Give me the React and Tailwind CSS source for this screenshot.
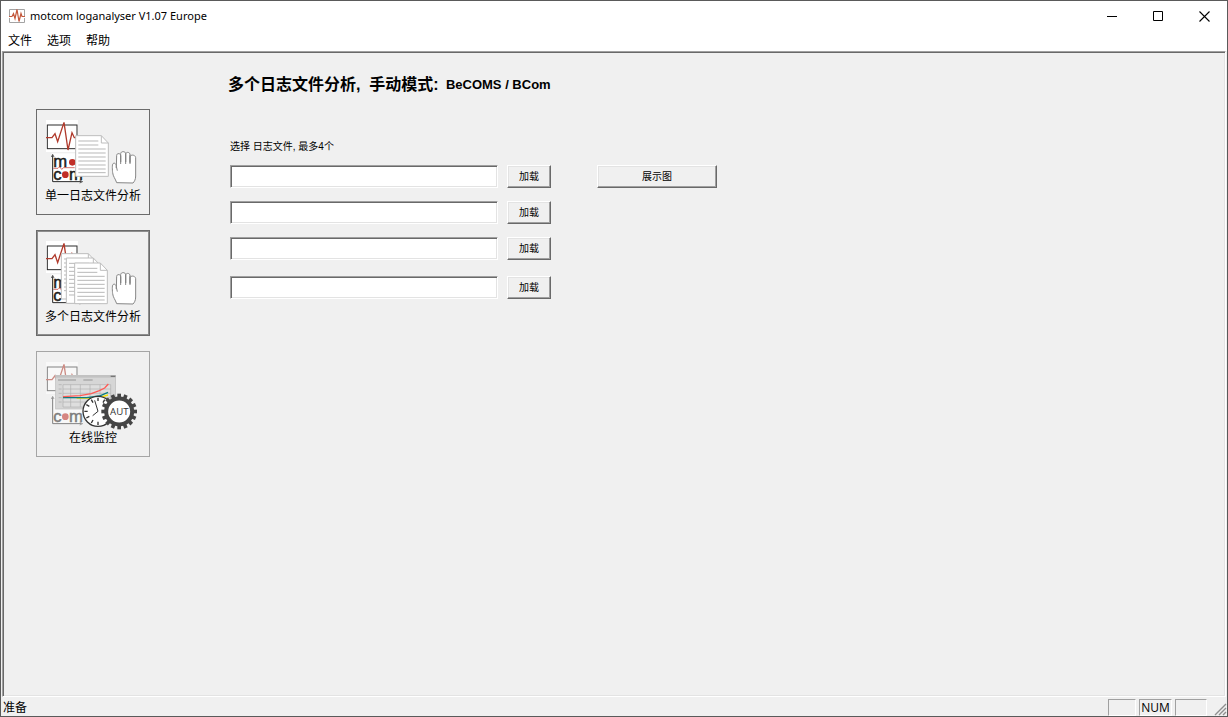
import React, { useState } from 'react';

const menuItems = ['文件', '选项', '帮助'];

const modes = [
  { id: 'single', label: '单一日志文件分析' },
  { id: 'multi', label: '多个日志文件分析' },
  { id: 'online', label: '在线监控', disabled: true },
];

const raised =
  'border border-t-white border-l-white border-b-[#696969] border-r-[#696969] shadow-[inset_-1px_-1px_0_#a0a0a0,inset_1px_1px_0_#e3e3e3]';

const AppIcon = () => (
  <svg width="16" height="16" viewBox="0 0 16 16" fill="none" aria-hidden="true">
    <path d="M0.5 9V1.5H15.5V9M0.5 10V14.5H15.5V10" stroke="#a3a3a3" />
    <path d="M0 8.5h3l1.5-3 1.5 5 2-9 2 12 2-8 1 3h3" stroke="#c4583c" strokeWidth="1.2" />
  </svg>
);

// Heartbeat frame that sits behind every mode icon
const Pulse = () => (
  <>
    <rect x="48" y="50" width="96" height="96" fill="#fff" />
    <rect x="52" y="65" width="89" height="71" fill="none" stroke="#2c2c2c" strokeWidth="3" />
    <path
      d="M48 103H66L75 91L83 115L102 57L114 140L126 88L133 103H146"
      fill="none"
      stroke="#b03a2c"
      strokeWidth="4"
    />
  </>
);

const Axes = () => (
  <g stroke="#222" strokeWidth="3" fill="none">
    <path d="M68 156V235H154" />
    <path d="M64 161L68 153L72 161M149 231L158 235L149 239" strokeWidth="2" />
  </g>
);

const Sheet = ({ x, y, w = 98, h = 122 }) => (
  <g transform={`translate(${x} ${y})`}>
    <path d={`M0 0H${w - 21}L${w} 22V${h}H0Z`} fill="#fff" stroke="#bdbdbd" strokeWidth="3" />
    <path d={`M${w - 21} 0V22H${w}`} fill="none" stroke="#bdbdbd" strokeWidth="3" />
    <path
      d="M8 16H68M8 28H68M8 40H90M8 52H90M8 64H90M8 76H90M8 88H90M8 100H90M8 111H90"
      stroke="#a9a9a9"
      strokeWidth="2.5"
    />
  </g>
);

const Hand = () => (
  <path
    d="M260 238C256 226 249 219 248 208C247 200 246 184 249 181C254 177 259 182 259 189V194L260 156C260 149 272 149 272 157V176V151C272 143 287 143 287 151V176V153C287 145 300 145 300 154V178V162C300 153 316 153 317 163V218C317 228 313 235 309 239Z M272 157V182M287 151V182M300 154V182M259 189L262 202"
    fill="#fff"
    stroke="#858585"
    strokeWidth="3"
    strokeLinejoin="round"
  />
);

const Brand = () => (
  <g>
    <rect x="65" y="150" width="94" height="88" fill="#fff" />
    <text
      fontFamily="'Liberation Sans', Arial, sans-serif"
      fontSize="50"
      fill="#1c1c1c"
      stroke="#1c1c1c"
      strokeWidth="1.5"
    >
      <tspan x="70" y="190">m</tspan>
      <tspan x="70" y="229">c</tspan>
      <tspan x="117" y="229">m</tspan>
    </text>
    <circle cx="127" cy="177" r="10" fill="#c12e27" />
    <circle cx="106" cy="214" r="10" fill="#c12e27" />
    <path d="M70 195H84L89 190L95 198L101 193H134" stroke="#c12e27" strokeWidth="2" fill="none" />
    <Axes />
  </g>
);

const SingleIcon = () => (
  <>
    <Pulse />
    <Brand />
    <Sheet x={137} y={97} />
    <Hand />
  </>
);

const MultiIcon = () => (
  <>
    <Pulse />
    <Brand />
    <Sheet x={94} y={88} w={102} h={136} />
    <Sheet x={109} y={101} w={102} h={136} />
    <Sheet x={134} y={116} />
    <Hand />
  </>
);

const gearTeeth = Array.from({ length: 16 }, (_, i) => i * 22.5);

const OnlineIcon = () => (
  <>
    <g opacity="0.55">
      <Pulse />
      <rect x="65" y="150" width="94" height="88" fill="#fff" />
      <text
        fontFamily="'Liberation Sans', Arial, sans-serif"
        fontSize="50"
        fill="#1c1c1c"
        stroke="#1c1c1c"
        strokeWidth="1.5"
      >
        <tspan x="70" y="229">c</tspan>
        <tspan x="117" y="229">m</tspan>
      </text>
      <circle cx="106" cy="214" r="10" fill="#c12e27" />
      <Axes />
    </g>
    <rect x="77" y="90" width="180" height="101" fill="#d6d6d6" stroke="#bcbcbc" strokeWidth="2" />
    <rect x="77" y="89" width="180" height="8" fill="#c2c2c2" />
    <path d="M242 93H256" stroke="#777" strokeWidth="4" />
    <path d="M84 104H138M160 104H188" stroke="#777" strokeWidth="2" />
    <rect x="99" y="118" width="143" height="67" fill="#dedede" />
    <path
      d="M99 118H242M99 131H242M99 144H242M99 157H242M99 170H242M99 185H242M99 118V185M122 118V185M151 118V185M180 118V185M210 118V185M242 118V185"
      stroke="#b1b1b1"
      strokeWidth="2"
    />
    <path d="M86 118H95M86 131H95M86 144H95M86 157H95M86 170H95" stroke="#aaa" strokeWidth="2" />
    <path d="M140 158H185L210 156L234 149" stroke="#f1e400" strokeWidth="4" fill="none" />
    <path d="M99 157H170L208 152L234 141" stroke="#0b7d80" strokeWidth="4" fill="none" />
    <path d="M99 154L150 151L184 145L208 136L224 128L235 116" stroke="#ff5b55" strokeWidth="4" fill="none" />
    <circle cx="204" cy="198" r="45" fill="#fff" stroke="#333" strokeWidth="4" />
    <path
      d="M204 157V167M184 163L189 172M169 178L178 183M163 198H173M169 218L178 213M184 233L189 224M204 229V239M224 163L219 172"
      stroke="#333"
      strokeWidth="4"
    />
    <path d="M194 165L204 198L188 211" stroke="#333" strokeWidth="3" fill="none" />
    {gearTeeth.map((a) => (
      <rect key={a} x="262" y="145" width="11" height="14" fill="#454545" transform={`rotate(${a} 267.5 198.5)`} />
    ))}
    <circle cx="267.5" cy="198.5" r="39" fill="#fff" stroke="#454545" strokeWidth="12" />
    <text
      x="268"
      y="208"
      textAnchor="middle"
      fontFamily="'Open Sans', sans-serif"
      fontSize="29"
      fill="#333"
    >
      AUT
    </text>
  </>
);

const icons = { single: SingleIcon, multi: MultiIcon, online: OnlineIcon };

const ModeButton = ({ mode, active, onClick }) => {
  const Icon = icons[mode.id];
  let border = 'border-[#6b6b6b]';
  if (active) border = 'border-[#6b6b6b] shadow-[inset_0_0_0_1px_#8e8e8e]';
  if (mode.disabled) border = 'border-[#a5a5a5]';
  return (
    <button
      type="button"
      disabled={mode.disabled}
      onClick={onClick}
      className={`flex h-[106px] w-full flex-col items-center justify-center border ${border}`}
    >
      <svg width="94" height="68" viewBox="48 50 282 204" aria-hidden="true">
        <Icon />
      </svg>
      <span className="text-[12px] leading-4 whitespace-nowrap">{mode.label}</span>
    </button>
  );
};

const FileRow = ({ index, value, onChange }) => (
  <div className="flex gap-[9px] last:mt-[3px]">
    <input
      type="text"
      aria-labelledby="files-label"
      value={value}
      onChange={(e) => onChange(index, e.target.value)}
      className="h-[23px] w-[268px] border border-t-[#a0a0a0] border-l-[#a0a0a0] border-b-white border-r-white bg-white px-1 text-[11px] shadow-[inset_1px_1px_0_#696969,inset_-1px_-1px_0_#e3e3e3] outline-none"
    />
    <button type="button" className={`h-[23px] w-11 text-[10px] ${raised}`}>
      加载
    </button>
  </div>
);

const App = () => {
  const [mode, setMode] = useState('multi');
  const [files, setFiles] = useState(['', '', '', '']);

  const updateFile = (index, value) => {
    setFiles(files.map((f, i) => (i === index ? value : f)));
  };

  return (
    <div className="flex min-h-screen flex-col border border-[#5a5a5a] bg-[#f0f0f0] font-['Open_Sans','Noto_Sans_CJK_SC',sans-serif] text-[12px] text-black">
      {/* Title bar */}
      <header className="flex h-[30px] items-center bg-white pl-2">
        <AppIcon />
        <h1 className="ml-[5px] flex-1 text-[11px] font-['Noto_Sans','Noto_Sans_CJK_SC',sans-serif]">
          motcom loganalyser V1.07 Europe
        </h1>
        <button type="button" aria-label="最小化" className="flex h-full w-[46px] items-center justify-center">
          <svg width="11" height="11" viewBox="0 0 11 11" stroke="#000">
            <path d="M0 5.5H10" />
          </svg>
        </button>
        <button type="button" aria-label="最大化" className="flex h-full w-[46px] items-center justify-center">
          <svg width="11" height="11" viewBox="0 0 11 11" fill="none" stroke="#000">
            <path d="M0.5 0.5H9.5V9.5H0.5Z" />
          </svg>
        </button>
        <button type="button" aria-label="关闭" className="flex h-full w-[46px] items-center justify-center">
          <svg width="11" height="11" viewBox="0 0 11 11" stroke="#000" strokeWidth="1.1">
            <path d="M0.5 0.5L10.5 10.5M10.5 0.5L0.5 10.5" />
          </svg>
        </button>
      </header>

      {/* Menu */}
      <nav className="flex h-5 items-center gap-[15px] bg-white pl-[7px]">
        {menuItems.map((item) => (
          <button key={item} type="button" className="text-[12px] leading-5">
            {item}
          </button>
        ))}
      </nav>

      {/* Client area */}
      <main className="mx-px flex flex-1 border border-t-[#a0a0a0] border-l-[#a0a0a0] border-b-white border-r-white pt-[17px] pl-[33px] shadow-[inset_1px_1px_0_#696969,inset_-1px_-1px_0_#e3e3e3]">
        <aside className="flex w-[114px] shrink-0 flex-col gap-[15px] pt-10">
          {modes.map((m) => (
            <ModeButton key={m.id} mode={m} active={mode === m.id} onClick={() => setMode(m.id)} />
          ))}
        </aside>

        <section className="flex-1 pl-20">
          <h2 className="-ml-0.5 flex h-8 items-center font-bold whitespace-pre">
            <span className="text-[16px] font-['Liberation_Sans','Noto_Sans_CJK_SC',sans-serif]">
              多个日志文件分析,  手动模式:
            </span>
            <span className="text-[13px] font-['Liberation_Sans',sans-serif]">{'  '}BeCOMS / BCom</span>
          </h2>
          <p
            id="files-label"
            className="mt-9 text-[10px] leading-5 font-['Liberation_Sans','Noto_Sans_CJK_SC',sans-serif]"
          >
            选择 日志文件, 最多4个
          </p>
          <div className="mt-2 flex items-start gap-[46px]">
            <div className="flex flex-col gap-[13px]">
              {files.map((file, i) => (
                <FileRow key={i} index={i} value={file} onChange={updateFile} />
              ))}
            </div>
            <button type="button" className={`h-[23px] w-[120px] text-[10px] ${raised}`}>
              展示图
            </button>
          </div>
        </section>
      </main>

      {/* Status bar */}
      <footer className="flex h-[19px] items-end gap-[3px]">
        <span className="flex-1 pl-0.5 text-[12px] leading-4">准备</span>
        <span className="h-[17px] w-7 border border-t-[#a0a0a0] border-l-[#a0a0a0] border-b-white border-r-white" />
        <span className="h-[17px] w-[33px] border border-t-[#a0a0a0] border-l-[#a0a0a0] border-b-white border-r-white text-center text-[12px] leading-4">
          NUM
        </span>
        <span className="h-[17px] w-8 border border-t-[#a0a0a0] border-l-[#a0a0a0] border-b-white border-r-white" />
        <svg className="ml-1" width="13" height="13" viewBox="0 0 13 13" stroke="#8f8f8f" aria-hidden="true">
          <path d="M1 12L12 1M5 12L12 5M9 12L12 9" strokeWidth="1.4" />
        </svg>
      </footer>
    </div>
  );
};

export default App;
